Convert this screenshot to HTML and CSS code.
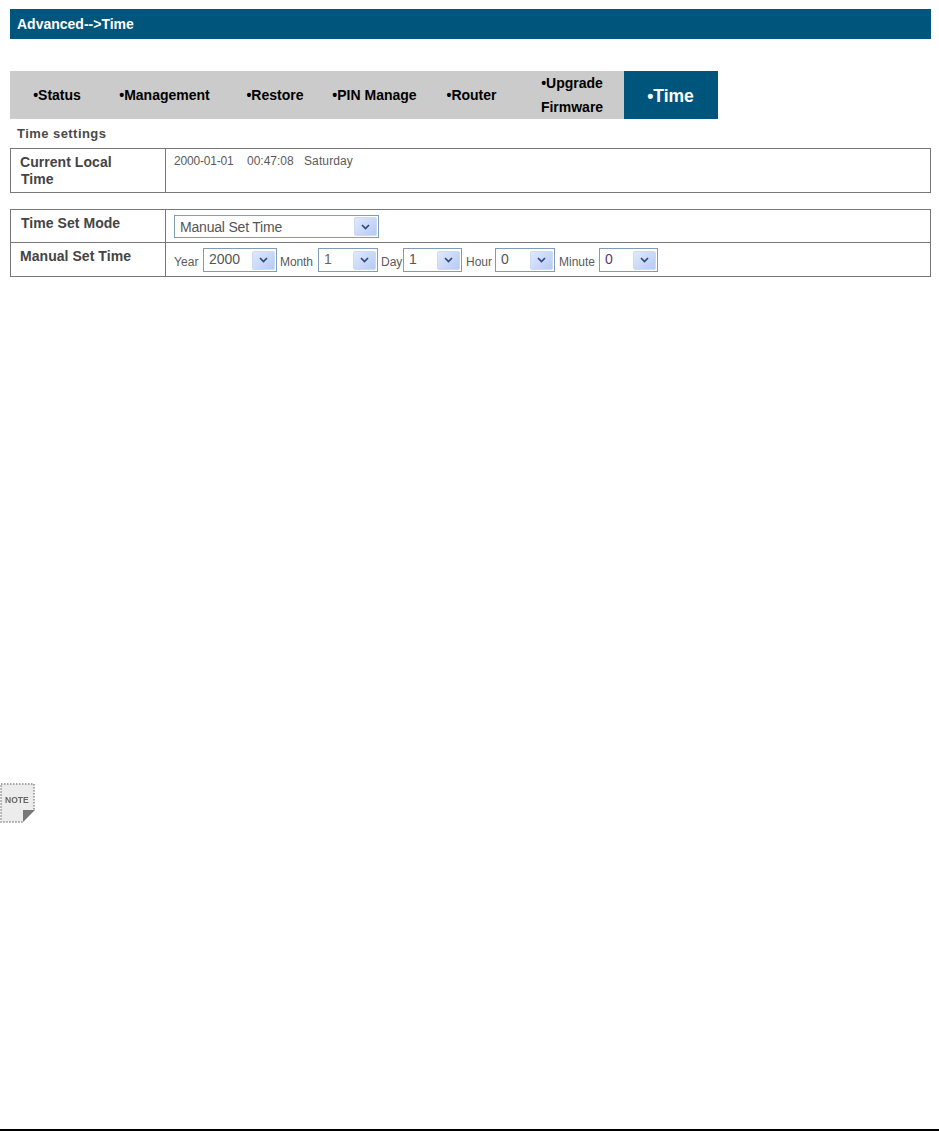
FILE: index.html
```html
<!DOCTYPE html>
<html lang="en">
<head>
<meta charset="utf-8">
<title>Time</title>
<link rel="stylesheet" href="styles.css">
</head>
<body>
<div class="page">
  <header class="title-bar">Advanced--&gt;Time</header>
  <nav class="tabs">
    <a class="tab">•Status</a>
    <a class="tab">•Management</a>
    <a class="tab">•Restore</a>
    <a class="tab">•PIN Manage</a>
    <a class="tab">•Router</a>
    <a class="tab tab-wrap">•Upgrade<br>Firmware</a>
    <a class="tab tab-active">•Time</a>
  </nav>
  <h2 class="section-title">Time settings</h2>
  <div class="panel panel-local">
    <div class="row row-local">
      <div class="label label-local">Current Local<br><span class="indent">Time</span></div>
      <div class="value value-local"><span class="stamp-date">2000-01-01</span><span class="stamp-time">00:47:08</span><span class="stamp-day">Saturday</span></div>
    </div>
  </div>
  <div class="panel panel-set">
    <div class="row row-mode">
      <div class="label label-mode">Time Set Mode</div>
      <div class="value value-mode">
        <div class="select select-mode"><span class="select-text">Manual Set Time</span><span class="arrow"><svg viewBox="0 0 9 6" width="9" height="6"><path d="M1 1l3.5 3.5L8 1" fill="none" stroke="#2b4a7c" stroke-width="1.7"/></svg></span></div>
      </div>
    </div>
    <div class="row row-manual">
      <div class="label label-manual">Manual Set Time</div>
      <div class="value value-manual">
        <span class="unit unit-year">Year</span>
        <div class="select select-year"><span class="select-text">2000</span><span class="arrow"><svg viewBox="0 0 9 6" width="9" height="6"><path d="M1 1l3.5 3.5L8 1" fill="none" stroke="#2b4a7c" stroke-width="1.7"/></svg></span></div>
        <span class="unit unit-month">Month</span>
        <div class="select select-month"><span class="select-text text-olive">1</span><span class="arrow"><svg viewBox="0 0 9 6" width="9" height="6"><path d="M1 1l3.5 3.5L8 1" fill="none" stroke="#2b4a7c" stroke-width="1.7"/></svg></span></div>
        <span class="unit unit-day">Day</span>
        <div class="select select-day"><span class="select-text">1</span><span class="arrow"><svg viewBox="0 0 9 6" width="9" height="6"><path d="M1 1l3.5 3.5L8 1" fill="none" stroke="#2b4a7c" stroke-width="1.7"/></svg></span></div>
        <span class="unit unit-hour">Hour</span>
        <div class="select select-hour"><span class="select-text">0</span><span class="arrow"><svg viewBox="0 0 9 6" width="9" height="6"><path d="M1 1l3.5 3.5L8 1" fill="none" stroke="#2b4a7c" stroke-width="1.7"/></svg></span></div>
        <span class="unit unit-minute">Minute</span>
        <div class="select select-minute"><span class="select-text text-purple">0</span><span class="arrow"><svg viewBox="0 0 9 6" width="9" height="6"><path d="M1 1l3.5 3.5L8 1" fill="none" stroke="#2b4a7c" stroke-width="1.7"/></svg></span></div>
      </div>
    </div>
  </div>
  <div class="note">
    <svg class="note-icon" viewBox="0 0 36 40" width="36" height="40">
      <path d="M1 1H34V26L22 39H1Z" fill="#ececec" stroke="#8a8a8a" stroke-width="1.5" stroke-dasharray="1.5 1.5"/>
      <path d="M23 39V27H35Z" fill="#777"/>
      <text class="note-text" x="5" y="20">NOTE</text>
    </svg>
  </div>
  <div class="foot-rule"></div>
</div>
</body>
</html>
```
FILE: styles.css
```css
* { box-sizing: border-box; }
html, body { margin: 0; padding: 0; background: #fff; }
body { font-family: "Liberation Sans", Arial, sans-serif; }
.page { height: 1131px; display: flex; flex-direction: column; overflow: hidden; }

.title-bar {
  margin: 9px 8px 0 10px; height: 30px; padding: 0 7px;
  background: #00557c; color: #fff; font-size: 14px; font-weight: bold;
  line-height: 30px;
}

.tabs {
  margin: 32px 0 0 10px; width: 708px; height: 48px;
  display: grid; grid-template-columns: 94px 121px 100px 99px 95px 105px 94px;
  background: #cbcbcb;
}
.tab {
  display: flex; align-items: center; justify-content: center; text-align: center;
  color: #000; font-size: 14px; font-weight: bold; padding-bottom: 1px;
}
.tab-wrap { line-height: 24px; padding: 0 0 0 1px; }
.tab-active { background: #00557c; color: #fff; font-size: 17.5px; padding: 3px 1px 0 0; }

.section-title {
  margin: 7px 0 0 17px; height: 15px; color: #4a4a4a; font-size: 13px; font-weight: bold;
  line-height: 15px; letter-spacing: 0.45px;
}

.panel { margin: 0 8px 0 10px; border: 1px solid #777; }
.panel-local { margin-top: 7px; height: 45px; }
.panel-set { margin-top: 16px; height: 68px; }
.row { display: flex; }
.row-local { height: 43px; }
.row-mode { height: 33px; border-bottom: 1px solid #777; }
.row-manual { height: 33px; }
.label {
  width: 155px; flex: none; color: #444; font-size: 14px; font-weight: bold;
  border-right: 1px solid #777; padding-left: 10px;
}
.label-local { line-height: 17px; padding: 5px 0 0 9px; letter-spacing: 0.05px; }
.label-mode { line-height: 16px; padding-top: 5px; letter-spacing: 0.05px; }
.label-manual { line-height: 16px; padding: 5px 0 0 9px; letter-spacing: 0.05px; }
.indent { margin-left: 1px; }
.value { flex: 1; display: flex; color: #5a5a5a; font-size: 12px; padding-left: 8px; }
.value-local { padding-top: 5px; line-height: 15px; }
.stamp-date { width: 73px; letter-spacing: -0.2px; }
.stamp-time { width: 57px; }
.stamp-day { letter-spacing: 0.12px; }
.value-mode { padding-top: 5px; }
.value-manual { padding-top: 5px; align-items: flex-start; }

.select {
  height: 24px; border: 1px solid #7f9db9; background: #fff; display: flex;
  align-items: center; justify-content: space-between; padding: 1px;
  color: #555; font-size: 14px;
}
.select-text { padding-left: 4px; line-height: 17px; margin-top: -1px; }
.text-olive { color: #6b6b3a; }
.text-purple { color: #5a3a6a; }
.arrow {
  width: 23px; height: 19px; flex: none; display: flex; align-items: center; justify-content: center;
  background: linear-gradient(135deg, #e0e9fc, #b6caf4);
  border-radius: 2px; border: 1px solid #cdd9f6;
}
.select-mode { width: 205px; height: 23px; }
.select-mode .select-text { margin-top: 1px; letter-spacing: -0.2px; }
.select-year { width: 74px; margin-left: 3px; }
.select-month { width: 60px; margin-left: 4px; }
.select-day { width: 59px; }
.select-hour { width: 60px; margin-left: 3px; }
.select-minute { width: 59px; margin-left: 4px; }
.unit { line-height: 15px; padding-top: 7px; color: #5a5a5a; }
.unit-year { width: 26px; letter-spacing: 0.1px; }
.unit-month { margin-left: 3px; width: 34px; letter-spacing: -0.1px; white-space: nowrap; }
.unit-day { margin-left: 3px; width: 22px; }
.unit-hour { margin-left: 4px; width: 26px; }
.unit-minute { margin-left: 4px; width: 36px; }

.note { margin-top: 506px; height: 40px; display: flex; }
.note-icon { filter: blur(0.4px); }
.note-text { font-family: "Liberation Sans", sans-serif; font-size: 8.5px; font-weight: bold; fill: #666; }

.foot-rule { margin-top: auto; height: 2px; background: #000; }
```
